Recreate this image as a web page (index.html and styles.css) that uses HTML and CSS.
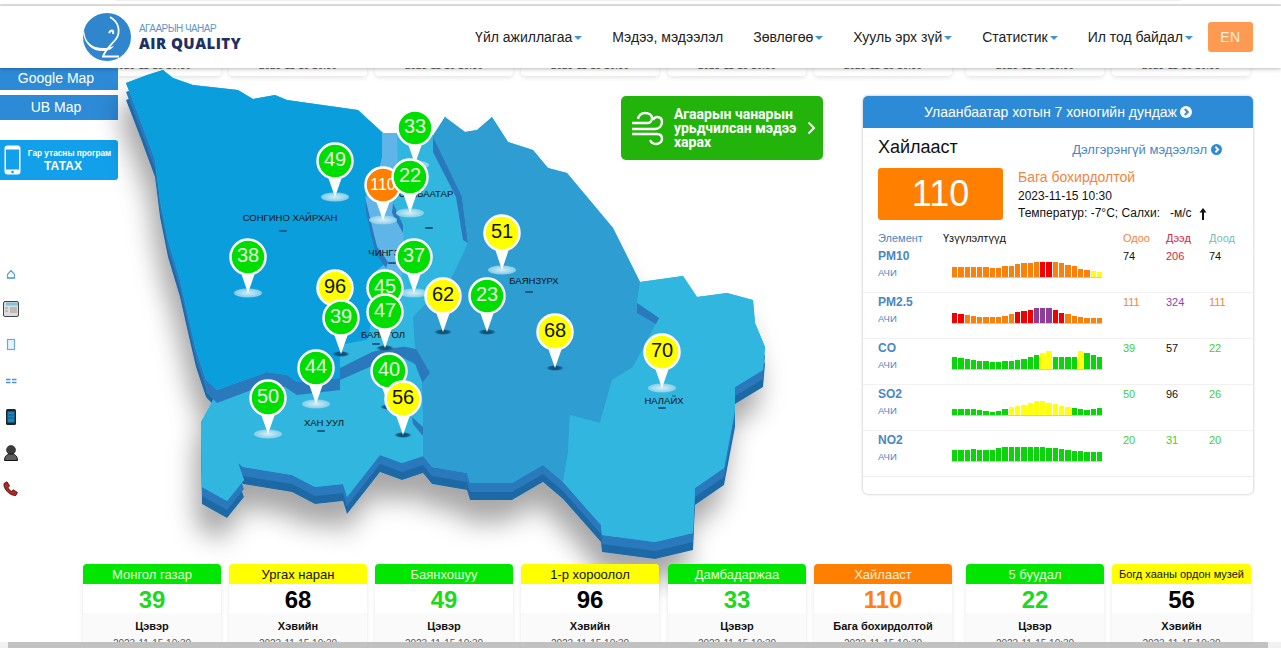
FILE: index.html
```html
<!DOCTYPE html>
<html lang="mn">
<head>
<meta charset="utf-8">
<title>Air Quality</title>
<link rel="stylesheet" href="styles.css">
</head>
<body>
<svg class="defs" width="0" height="0" aria-hidden="true">
  <symbol id="chev-circle" viewBox="0 0 12 12"><circle cx="6" cy="6" r="6" fill="currentColor"/><path d="M4.8 3 7.8 6 4.8 9" fill="none" stroke="var(--chev,#fff)" stroke-width="2"/></symbol>
</svg>
<div class="page">
  <div class="top-strip"><div class="top-sliver"></div></div>
  <header class="header">
    <a class="brand">
      <svg class="brand-mark" viewBox="0 0 48 48" width="48" height="48">
        <circle cx="24" cy="24" r="24" fill="#2f86cd"/>
        <path d="M0 20C2 32 10 38 19 38C25 38 29 36 31 33C26 35 20 36 14 34C7 32 3 27 1 17Z" fill="#fff"/>
        <circle cx="17" cy="19" r="15.500" fill="#2f86cd"/>
        <path d="M27 4C36 9 38 19 33 26C28 32 22 37 20 43.500L36 43.500" fill="none" stroke="#fff" stroke-width="1.800"/>
        <path d="M26 20C28 16 31 17 30 21" fill="none" stroke="#fff" stroke-width="2"/>
      </svg>
      <span class="brand-text">
        <span class="brand-top">АГААРЫН ЧАНАР</span>
        <span class="brand-main">AIR QUALITY</span>
      </span>
    </a>
    <nav class="nav">
      <a class="nav-item nav-drop">Үйл ажиллагаа</a>
      <a class="nav-item">Мэдээ, мэдээлэл</a>
      <a class="nav-item nav-drop">Зөвлөгөө</a>
      <a class="nav-item nav-drop">Хууль эрх зүй</a>
      <a class="nav-item nav-drop">Статистик</a>
      <a class="nav-item nav-drop">Ил тод байдал</a>
      <a class="lang">EN</a>
    </nav>
  </header>

  <div class="ghost-row">
    <div class="ghost">2023-11-15 10:30</div>
    <div class="ghost">2023-11-15 10:30</div>
    <div class="ghost">2023-11-15 10:30</div>
    <div class="ghost">2023-11-15 10:30</div>
    <div class="ghost shift-s">2023-11-15 10:30</div>
    <div class="ghost">2023-11-15 10:30</div>
    <div class="ghost shift-l">2023-11-15 10:30</div>
    <div class="ghost">2023-11-15 10:30</div>
  </div>

  <main class="main">
    <aside class="side">
      <a class="map-btn map-btn-first">Google Map</a>
      <a class="map-btn map-btn-second">UB Map</a>
      <a class="app-banner">
        <svg class="app-phone" viewBox="0 0 17 30" width="17" height="30">
          <rect x="0.5" y="0.5" width="16" height="29" rx="3" fill="#fff"/>
          <rect x="2" y="4.5" width="13" height="20" fill="#12a0ea"/>
          <circle cx="8.5" cy="27" r="1.3" fill="#12a0ea"/>
        </svg>
        <span class="app-text"><span class="app-small">Гар утасны програм</span><span class="app-big">ТАТАХ</span></span>
      </a>
      <ul class="side-icons">
        <li><svg width="16" height="16" viewBox="0 0 16 16"><path d="M4.500 13V9.500L8 5.500 11.500 9.500V13Z" fill="none" stroke="#5aa3d8" stroke-width="1.200"/><path d="M4 13h8" stroke="#5aa3d8" stroke-width="1.500"/></svg></li>
        <li><svg width="16" height="16" viewBox="0 0 16 16"><rect x=".5" y=".5" width="15" height="15" rx="1.500" fill="#ddd" stroke="#444"/><path d="M3 1.500h12v3H3z" fill="#7cc6dd"/><rect x="7" y="6" width="7" height="6" fill="#bbb"/><path d="M2 7h3M2 10h3" stroke="#999"/></svg></li>
        <li><svg width="16" height="16" viewBox="0 0 16 16"><rect x="4.500" y="2.500" width="7" height="10" fill="#eaf3fb" stroke="#6aa9dc" stroke-width="1.200"/></svg></li>
        <li><svg width="16" height="16" viewBox="0 0 16 16"><path d="M3 6.500h4.500M3 9.500h4.500M9 6.500h4.500M9 9.500h4.500" stroke="#4c93d4" stroke-width="1.500"/></svg></li>
        <li><svg width="16" height="16" viewBox="0 0 16 16"><rect x="3" y="0" width="10" height="16" rx="1.500" fill="#222"/><rect x="4.500" y="2.500" width="7" height="11" fill="#1188c4"/><path d="M5 6h6M5 9h6" stroke="#0b5c86"/></svg></li>
        <li><svg width="16" height="16" viewBox="0 0 16 16"><circle cx="8" cy="5" r="4.500" fill="#3c3c3c" stroke="#222" stroke-width=".6"/><path d="M1.500 15.500c0-5 3-6.500 6.500-6.500s6.500 1.500 6.500 6.500z" fill="#5e5e5e" stroke="#111"/></svg></li>
        <li><svg width="16" height="16" viewBox="0 0 16 16"><path d="M1 2.500 4 .8l2.500 4-1.500 2c.8 1.600 1.800 2.700 3.500 3.500l1.800-1.500 4.200 2.700-1.700 3C7 15 0 8 1 2.500Z" fill="#b8241f" stroke="#3a0d0b" stroke-width=".8"/></svg></li>
      </ul>
    </aside>

    <section class="stage">
      <svg class="map" viewBox="118 68 745 496" width="745" height="496">
        <defs>
          <filter id="map-shadow" filterUnits="userSpaceOnUse" x="60" y="20" width="800" height="600">
            <feDropShadow dx="-6" dy="22" stdDeviation="13" flood-color="#000" flood-opacity=".35"/>
          </filter>
          <radialGradient id="glow"><stop offset="0" stop-color="#e6f6fb"/><stop offset="1" stop-color="#8fd0e8"/></radialGradient>
          <radialGradient id="shade"><stop offset="0" stop-color="#0f4a70"/><stop offset=".6" stop-color="#17587f"/><stop offset="1" stop-color="#17587f" stop-opacity="0"/></radialGradient>
          <path id="outline" d="M126 83 147 75 163 70 173 78 193 85 238 90 253 99 275 95 287 100 358 110 383 133 433 135 445 117 465 132 477 130 492 117 508 142 533 150 548 168 567 173 613 228 640 282 683 276 697 297 727 293 753 300 755 323 765 347 763 370 735 387 735 410 724 468 695 488 693 533 655 542 602 535 601 525 563 482 543 465 512 483 470 483 467 473 432 467 423 456 402 463 380 455 347 497 343 484 315 487 292 475 243 467 238 463 244 480 227 501 202 487 201 422 213 400 217 392 206 380 196 350 189 320 180 280 168 240 160 200 155 160 141 122Z"/>
        </defs>
        <g filter="url(#map-shadow)">
          <use href="#outline" y="17" class="wall-low"/>
          <use href="#outline" y="9" class="wall-high"/>
          <use href="#outline" class="face-khan"/>
        </g>
        <path class="face-khan" d="M201 422 213 400 217 392 270 375 340 378 400 345 423 380 423 456 402 463 380 455 347 497 343 484 315 487 292 475 243 467 238 463 244 480 227 501 202 487Z"/>
        <path class="wall-high" d="M206 380 217 390 267 372 287 375 297 382 340 378 340 390 297 395 285 387 267 384 217 403 206 392Z"/>
        <path class="wall-high" d="M340 368 372 352 398 345 400 355 372 366 340 380Z"/>
        <path class="wall-high" d="M397 345 420 350 431 374 423 384 415 364 398 355Z"/>
        <path class="wall-high" d="M412 417 423 427 423 436 413 424Z"/>
        <path class="face-skh" d="M126 83 147 75 163 70 173 78 193 85 238 90 253 99 275 95 287 100 358 110 383 133 382 157 378 175 365 197 370 223 377 247 385 265 377 280 372 320 367 340 340 345 340 378 297 382 287 375 267 372 217 390 206 380 196 350 189 320 180 280 168 240 160 200 155 160 141 122Z"/>
        <path class="face-khan" d="M383 133 433 135 456 197 468 245 452 277 418 305 415 345 372 351 340 368 340 345 367 340 378 300 385 265Z"/>
        <path class="wall-high" d="M433 137 445 117 462 197 468 243 463 240 456 197 433 152Z"/>
        <path class="face-chin" d="M382 133 397 133 398 175 392 200 403 226 405 262 398 292 380 292 377 270 388 262 377 245 370 225 365 200 378 175 382 157Z"/>
        <path class="wall-high" d="M365 197 377 247 388 262 386 268 375 252 366 212Z"/>
        <path class="wall-high" d="M393 203 403 225 403 233 392 213Z"/>
        <path class="face-bayanz" d="M433 137 445 117 465 132 477 130 492 117 508 142 533 150 548 168 567 173 613 228 640 282 637 303 659 318 633 367 612 380 600 423 570 415 568 453 563 482 543 465 512 483 470 483 467 473 432 467 423 456 423 417 422 383 430 373 415 347 413 317 452 277 468 243 462 197Z"/>
        <path class="face-khan" d="M640 282 683 276 697 297 727 293 753 300 755 323 765 347 763 370 735 387 735 410 724 468 695 488 693 533 655 542 602 535 601 525 563 482 568 453 570 415 600 423 612 380 633 367 659 318 637 303Z"/>
        <path class="wall-high" d="M637 303 659 318 656 324 637 313Z"/>

        <g class="labels">
          <text x="290" y="221" class="map-label">СОНГИНО ХАЙРХАН</text>
          <rect x="279" y="230" width="8" height="2" rx="1" class="dash"/>
          <text x="426" y="197" class="map-label">СҮХБААТАР</text>
          <rect x="425" y="227" width="8" height="2" rx="1" class="dash"/>
          <text x="397" y="256" class="map-label">ЧИНГЭЛТЭЙ</text>
          <rect x="388" y="262" width="8" height="2" rx="1" class="dash"/>
          <text x="534" y="284" class="map-label">БАЯНЗҮРХ</text>
          <rect x="525" y="291" width="8" height="2" rx="1" class="dash"/>
          <text x="383" y="338" class="map-label">БАЯНГОЛ</text>
          <rect x="372" y="343" width="8" height="2" rx="1" class="dash"/>
          <text x="324" y="426" class="map-label">ХАН УУЛ</text>
          <rect x="317" y="430" width="8" height="2" rx="1" class="dash"/>
          <text x="664" y="404" class="map-label">НАЛАЙХ</text>
          <rect x="658" y="407" width="8" height="2" rx="1" class="dash"/>
        </g>

        <g transform="translate(415 128)" class="pin green"><ellipse cy="37" rx="14" ry="4.500" class="glow"/><path d="M-7 16 0 36 7 16Z" class="tail"/><circle r="17.500" class="disc"/><text y="4.500">33</text></g>
        <g transform="translate(335 161)" class="pin green"><ellipse cy="36" rx="14" ry="4.500" class="glow"/><path d="M-7 16 0 36 7 16Z" class="tail"/><circle r="17.500" class="disc"/><text y="4.500">49</text></g>
        <g transform="translate(383 185)" class="pin orange"><ellipse cy="35" rx="14" ry="4.500" class="glow"/><path d="M-7 16 0 35 7 16Z" class="tail"/><circle r="17.500" class="disc"/><text y="5" class="small">110</text></g>
        <g transform="translate(410 177)" class="pin green"><ellipse cy="36" rx="14" ry="4.500" class="glow"/><path d="M-7 16 0 36 7 16Z" class="tail"/><circle r="17.500" class="disc"/><text y="4.500">22</text></g>
        <g transform="translate(248 257)" class="pin green"><ellipse cy="36" rx="14" ry="4.500" class="glow"/><path d="M-7 16 0 36 7 16Z" class="tail"/><circle r="17.500" class="disc"/><text y="4.500">38</text></g>
        <g transform="translate(502 233)" class="pin yellow"><ellipse cy="37" rx="14" ry="4.500" class="glow"/><path d="M-7 16 0 37 7 16Z" class="tail"/><circle r="17.500" class="disc"/><text y="4.500">51</text></g>
        <g transform="translate(414 257)" class="pin green"><ellipse cy="36" rx="14" ry="4.500" class="glow"/><path d="M-7 16 0 36 7 16Z" class="tail"/><circle r="17.500" class="disc"/><text y="4.500">37</text></g>
        <g transform="translate(335 288)" class="pin yellow"><path d="M-7 16 0 36 7 16Z" class="tail"/><circle r="17.500" class="disc"/><text y="4.500">96</text></g>
        <g transform="translate(385 288)" class="pin green"><path d="M-7 16 0 36 7 16Z" class="tail"/><circle r="17.500" class="disc"/><text y="4.500">45</text></g>
        <g transform="translate(443 296)" class="pin yellow"><ellipse cy="36" rx="9" ry="3" class="shade"/><path d="M-7 16 0 36 7 16Z" class="tail"/><circle r="17.500" class="disc"/><text y="4.500">62</text></g>
        <g transform="translate(487 296)" class="pin green"><ellipse cy="36" rx="9" ry="3" class="shade"/><path d="M-7 16 0 36 7 16Z" class="tail"/><circle r="17.500" class="disc"/><text y="4.500">23</text></g>
        <g transform="translate(341 318)" class="pin green"><ellipse cy="36" rx="9" ry="3" class="shade"/><path d="M-7 16 0 36 7 16Z" class="tail"/><circle r="17.500" class="disc"/><text y="4.500">39</text></g>
        <g transform="translate(385 312)" class="pin green"><ellipse cy="36" rx="9" ry="3" class="shade"/><path d="M-7 16 0 36 7 16Z" class="tail"/><circle r="17.500" class="disc"/><text y="4.500">47</text></g>
        <g transform="translate(555 332)" class="pin yellow"><ellipse cy="36" rx="9" ry="3" class="shade"/><path d="M-7 16 0 36 7 16Z" class="tail"/><circle r="17.500" class="disc"/><text y="4.500">68</text></g>
        <g transform="translate(662 352)" class="pin yellow"><ellipse cy="36" rx="14" ry="4.500" class="glow"/><path d="M-7 16 0 36 7 16Z" class="tail"/><circle r="17.500" class="disc"/><text y="4.500">70</text></g>
        <g transform="translate(316 368)" class="pin green"><ellipse cy="36" rx="14" ry="4.500" class="glow"/><path d="M-7 16 0 36 7 16Z" class="tail"/><circle r="17.500" class="disc"/><text y="4.500">44</text></g>
        <g transform="translate(389 371)" class="pin green"><ellipse cy="36" rx="9" ry="3" class="shade"/><path d="M-7 16 0 36 7 16Z" class="tail"/><circle r="17.500" class="disc"/><text y="4.500">40</text></g>
        <g transform="translate(268 398)" class="pin green"><ellipse cy="36" rx="14" ry="4.500" class="glow"/><path d="M-7 16 0 36 7 16Z" class="tail"/><circle r="17.500" class="disc"/><text y="4.500">50</text></g>
        <g transform="translate(403 399)" class="pin yellow"><ellipse cy="36" rx="9" ry="3" class="shade"/><path d="M-7 16 0 36 7 16Z" class="tail"/><circle r="17.500" class="disc"/><text y="4.500">56</text></g>
      </svg>

      <a class="forecast">
        <svg class="wind" viewBox="631 110 33 36" width="33" height="36">
          <path d="M638 119C639 115 642 113 645 113C649 113 652 115 652 118C652 121 650 123 648 123H632M632 129H655C659 129 662 126 662 122C662 119 660 117 657 117C655 117 654 118 653 120M632 134H657C660 134 662 136 662 139C662 142 659 144 656 144C653 144 651 142 650 140" fill="none" stroke="#fff" stroke-width="2.400"/>
        </svg>
        <span class="forecast-text">Агаарын чанарын урьдчилсан мэдээ харах</span>
        <svg class="forecast-chev" viewBox="0 0 9 14" width="9" height="14"><path d="M1.500 1.500 7 7 1.500 12.500" fill="none" stroke="#fff" stroke-width="2"/></svg>
      </a>
    </section>

    <aside class="panel">
      <a class="panel-head">Улаанбаатар хотын 7 хоногийн дундаж <svg class="ico12" width="12" height="12"><use href="#chev-circle"/></svg></a>
      <div class="station-row">
        <h2 class="station">Хайлааст</h2>
        <a class="more">Дэлгэрэнгүй мэдээлэл <svg class="ico10" width="11" height="11"><use href="#chev-circle"/></svg></a>
      </div>
      <div class="summary">
        <div class="aqi-box">110</div>
        <div class="summary-text">
          <div class="level">Бага бохирдолтой</div>
          <div class="stamp">2023-11-15 10:30</div>
          <div class="weather"><span>Температур: -7°C; Салхи: &nbsp; -м/с</span>
            <svg class="arrow" viewBox="0 0 8 12" width="8" height="12"><path d="M4 0 7.500 4.500H5V12H3V4.500H.5Z" fill="#111"/></svg>
          </div>
        </div>
      </div>
      <div class="table">
        <div class="t-head">
          <span class="c-el">Элемент</span><span class="c-ind">Үзүүлэлтүүд</span>
          <span class="c-now">Одоо</span><span class="c-max">Дээд</span><span class="c-min">Доод</span>
        </div>
        <div class="t-row">
          <div><div class="el-name">PM10</div><div class="el-sub">АЧИ</div></div>
          <div class="spark">
            <i class="o" style="height:10px"></i><i class="o" style="height:10px"></i><i class="o" style="height:10px"></i><i class="o" style="height:10px"></i><i class="o" style="height:10px"></i><i class="o" style="height:10px"></i><i class="o" style="height:9px"></i><i class="o" style="height:9px"></i><i class="o" style="height:11px"></i><i class="o" style="height:11px"></i><i class="o" style="height:13px"></i><i class="o" style="height:14px"></i><i class="o" style="height:14px"></i><i class="o" style="height:15px"></i><i class="r" style="height:15px"></i><i class="r" style="height:15px"></i><i class="o" style="height:15px"></i><i class="o" style="height:14px"></i><i class="o" style="height:12px"></i><i class="o" style="height:11px"></i><i class="o" style="height:8px"></i><i class="o" style="height:7px"></i><i class="y" style="height:6px"></i><i class="y" style="height:5px"></i>
          </div>
          <span class="v">74</span><span class="v red">206</span><span class="v">74</span>
        </div>
        <div class="t-row">
          <div><div class="el-name">PM2.5</div><div class="el-sub">АЧИ</div></div>
          <div class="spark">
            <i class="r" style="height:10px"></i><i class="r" style="height:9px"></i><i class="o" style="height:8px"></i><i class="o" style="height:7px"></i><i class="o" style="height:6px"></i><i class="o" style="height:6px"></i><i class="o" style="height:6px"></i><i class="o" style="height:6px"></i><i class="o" style="height:7px"></i><i class="o" style="height:9px"></i><i class="r" style="height:11px"></i><i class="r" style="height:12px"></i><i class="r" style="height:13px"></i><i class="p" style="height:15px"></i><i class="p" style="height:15px"></i><i class="p" style="height:15px"></i><i class="r" style="height:13px"></i><i class="r" style="height:10px"></i><i class="o" style="height:9px"></i><i class="o" style="height:7px"></i><i class="o" style="height:6px"></i><i class="o" style="height:5px"></i><i class="o" style="height:5px"></i><i class="o" style="height:5px"></i>
          </div>
          <span class="v orange">111</span><span class="v purple">324</span><span class="v orange">111</span>
        </div>
        <div class="t-row">
          <div><div class="el-name">CO</div><div class="el-sub">АЧИ</div></div>
          <div class="spark">
            <i class="g" style="height:12px"></i><i class="g" style="height:11px"></i><i class="g" style="height:10px"></i><i class="g" style="height:9px"></i><i class="g" style="height:8px"></i><i class="g" style="height:8px"></i><i class="g" style="height:7px"></i><i class="g" style="height:7px"></i><i class="g" style="height:8px"></i><i class="g" style="height:8px"></i><i class="g" style="height:9px"></i><i class="g" style="height:10px"></i><i class="g" style="height:12px"></i><i class="g" style="height:14px"></i><i class="y" style="height:16px"></i><i class="y" style="height:18px"></i><i class="g" style="height:12px"></i><i class="g" style="height:12px"></i><i class="g" style="height:12px"></i><i class="g" style="height:12px"></i><i class="y" style="height:18px"></i><i class="g" style="height:16px"></i><i class="g" style="height:14px"></i><i class="g" style="height:12px"></i>
          </div>
          <span class="v green">39</span><span class="v">57</span><span class="v green">22</span>
        </div>
        <div class="t-row">
          <div><div class="el-name">SO2</div><div class="el-sub">АЧИ</div></div>
          <div class="spark">
            <i class="g" style="height:6px"></i><i class="g" style="height:6px"></i><i class="g" style="height:6px"></i><i class="g" style="height:6px"></i><i class="g" style="height:5px"></i><i class="g" style="height:4px"></i><i class="g" style="height:3px"></i><i class="g" style="height:4px"></i><i class="g" style="height:6px"></i><i class="y" style="height:8px"></i><i class="y" style="height:9px"></i><i class="y" style="height:10px"></i><i class="y" style="height:12px"></i><i class="y" style="height:14px"></i><i class="y" style="height:14px"></i><i class="y" style="height:12px"></i><i class="y" style="height:11px"></i><i class="y" style="height:9px"></i><i class="y" style="height:8px"></i><i class="g" style="height:7px"></i><i class="g" style="height:6px"></i><i class="g" style="height:5px"></i><i class="g" style="height:6px"></i><i class="g" style="height:7px"></i>
          </div>
          <span class="v green">50</span><span class="v">96</span><span class="v green">26</span>
        </div>
        <div class="t-row">
          <div><div class="el-name">NO2</div><div class="el-sub">АЧИ</div></div>
          <div class="spark">
            <i class="g" style="height:11px"></i><i class="g" style="height:11px"></i><i class="g" style="height:11px"></i><i class="g" style="height:12px"></i><i class="g" style="height:11px"></i><i class="g" style="height:11px"></i><i class="g" style="height:11px"></i><i class="g" style="height:13px"></i><i class="g" style="height:14px"></i><i class="g" style="height:14px"></i><i class="g" style="height:14px"></i><i class="g" style="height:14px"></i><i class="g" style="height:14px"></i><i class="g" style="height:14px"></i><i class="g" style="height:14px"></i><i class="g" style="height:13px"></i><i class="g" style="height:13px"></i><i class="g" style="height:12px"></i><i class="g" style="height:11px"></i><i class="g" style="height:10px"></i><i class="g" style="height:10px"></i><i class="g" style="height:9px"></i><i class="g" style="height:9px"></i><i class="g" style="height:9px"></i>
          </div>
          <span class="v green">20</span><span class="v green">31</span><span class="v green">20</span>
        </div>
      </div>
    </aside>
  </main>

  <section class="cards">
    <article class="card"><h3 class="card-head bg-green">Монгол газар</h3><div class="card-num t-green">39</div><div class="card-body"><div class="card-level">Цэвэр</div><div class="card-date">2023-11-15 10:30</div></div></article>
    <article class="card"><h3 class="card-head bg-yellow">Ургах наран</h3><div class="card-num">68</div><div class="card-body"><div class="card-level">Хэвийн</div><div class="card-date">2023-11-15 10:30</div></div></article>
    <article class="card"><h3 class="card-head bg-green">Баянхошуу</h3><div class="card-num t-green">49</div><div class="card-body"><div class="card-level">Цэвэр</div><div class="card-date">2023-11-15 10:30</div></div></article>
    <article class="card"><h3 class="card-head bg-yellow">1-р хороолол</h3><div class="card-num">96</div><div class="card-body"><div class="card-level">Хэвийн</div><div class="card-date">2023-11-15 10:30</div></div></article>
    <article class="card shift-s"><h3 class="card-head bg-green">Дамбадаржаа</h3><div class="card-num t-green">33</div><div class="card-body"><div class="card-level">Цэвэр</div><div class="card-date">2023-11-15 10:30</div></div></article>
    <article class="card"><h3 class="card-head bg-orange">Хайлааст</h3><div class="card-num t-orange">110</div><div class="card-body"><div class="card-level">Бага бохирдолтой</div><div class="card-date">2023-11-15 10:30</div></div></article>
    <article class="card shift-l"><h3 class="card-head bg-green">5 буудал</h3><div class="card-num t-green">22</div><div class="card-body"><div class="card-level">Цэвэр</div><div class="card-date">2023-11-15 10:30</div></div></article>
    <article class="card"><h3 class="card-head bg-yellow head-small">Богд хааны ордон музей</h3><div class="card-num">56</div><div class="card-body"><div class="card-level">Хэвийн</div><div class="card-date">2023-11-15 10:30</div></div></article>
  </section>

  <div class="scrollbar"><div class="scroll-thumb"></div></div>
</div>
</body>
</html>
```

FILE: styles.css
```css
* { box-sizing: border-box; }
html, body { margin: 0; padding: 0; height: 100%; overflow: hidden; background: #fff; }
body { font-family: "Liberation Sans", Arial, sans-serif; color: #111; }
a { color: inherit; text-decoration: none; }
.defs { position: absolute; }

.page { position: relative; width: 1281px; height: 648px; display: flex; flex-direction: column; overflow: hidden; }

.top-strip { height: 6px; flex: none; border-bottom: 2px solid #e4e4e4; }
.top-sliver { height: 1px; margin: 0 100px 0 115px; background: #f0f0f0; }

.header { position: relative; z-index: 3; flex: none; height: 62px; padding: 0 28px 0 83px; display: flex; align-items: center; justify-content: space-between; background: #fff; box-shadow: 0 1px 4px rgba(0,0,0,.28); }
.brand { display: flex; align-items: center; gap: 8px; }
.brand-mark { display: block; }
.brand-text { display: flex; flex-direction: column; }
.brand-top { font-size: 10px; line-height: 12px; color: #5e97cc; letter-spacing: -.55px; }
.brand-main { font-family: "Open Sans", sans-serif; font-weight: 800; font-size: 15px; line-height: 17px; color: #20305f; letter-spacing: .45px; }
.nav { display: flex; align-items: center; }
.nav-item { font-size: 14px; color: #222; margin-right: 30px; white-space: nowrap; }
.nav-drop::after { content: ""; display: inline-block; margin-left: 2px; vertical-align: 2px; border: 4px solid transparent; border-top-color: #3d95d2; border-bottom: 0; }
.lang { width: 45px; height: 30px; display: flex; align-items: center; justify-content: center; background: #ff9a52; color: #fdeee0; border-radius: 3px; font-size: 14px; letter-spacing: .5px; margin-left: -15px; }

.ghost-row { position: absolute; top: 60px; left: 83px; display: flex; gap: 8px; z-index: 0; }
.ghost { width: 138px; height: 16px; font-size: 10px; line-height: 11px; text-align: center; color: #555; background: #fff; border-radius: 4px; box-shadow: 0 2px 4px rgba(0,0,0,.1); }

.main { position: relative; z-index: 1; flex: none; height: 496px; display: flex; align-items: flex-start; }

.side { flex: none; width: 118px; display: flex; flex-direction: column; }
.map-btn { display: flex; align-items: center; justify-content: center; background: #2d8ad6; color: #fff; font-size: 14px; padding: 0 6px 2px 0; }
.map-btn-first { height: 22px; }
.map-btn-second { height: 25px; margin-top: 5px; }
.app-banner { height: 40px; margin-top: 20px; display: flex; align-items: center; padding-left: 4px; background: #12a0ea; border-radius: 0 3px 3px 0; color: #fff; }
.app-phone { flex: none; }
.app-text { flex: 1; display: flex; flex-direction: column; align-items: center; font-weight: 700; }
.app-small { font-size: 8.300px; line-height: 12px; white-space: nowrap; }
.app-big { font-size: 12px; line-height: 14px; margin-right: 13px; }
.side-icons { list-style: none; margin: 75px 0 0; padding: 0; display: flex; flex-direction: column; }
.side-icons li { height: 36px; display: flex; align-items: center; padding-left: 3px; }

.stage { position: relative; flex: none; width: 745px; height: 496px; }
.map { display: block; overflow: visible; }
.wall-low { fill: #1f69a6; }
.wall-high { fill: #2a79bd; }
.face-skh { fill: #0a9fdc; }
.face-khan { fill: #30b6df; }
.face-chin { fill: #5fb5e7; }
.face-bayanz { fill: #2e9dd2; }
.map-label { font-size: 9.500px; fill: #111; text-anchor: middle; }
.dash { fill: #1d5a86; }
.pin text { font-size: 20px; text-anchor: middle; }
.pin text.small { font-size: 16px; }
.pin .tail { fill: #fff; }
.pin .disc { stroke: #fff; stroke-width: 2.500; }
.pin .glow { fill: url(#glow); opacity: .9; }
.pin .shade { fill: url(#shade); }
.pin.green .disc { fill: #00dd00; }
.pin.green text { fill: #eafbe0; }
.pin.yellow .disc { fill: #ffff00; }
.pin.yellow text { fill: #111; }
.pin.orange .disc { fill: #ff8000; }
.pin.orange text { fill: #fff; }

.forecast { position: absolute; left: 503px; top: 28px; width: 202px; height: 64px; display: flex; align-items: center; padding: 0 7px 0 10px; background: #22b40a; border-radius: 5px; color: #fff; }
.wind { flex: none; }
.forecast-text { flex: 1; margin-left: 10px; font-family: Roboto, sans-serif; font-weight: 700; font-size: 14px; line-height: 14.300px; }
.forecast-chev { flex: none; }

.panel { flex: none; width: 390px; height: 398px; margin-top: 28px; background: #fff; border-radius: 5px; box-shadow: 0 0 3px rgba(0,0,0,.3); overflow: hidden; }
.panel-head { height: 32px; display: flex; align-items: center; justify-content: center; gap: 3px; background: #2d8ad6; color: #fff; font-size: 14px; }
.ico12 { color: #fff; --chev: #2d8ad6; }
.station-row { height: 40px; padding: 0 31px 0 15px; display: flex; align-items: center; justify-content: space-between; }
.station { margin: 0 0 1px; font-size: 18px; font-weight: 400; color: #111; }
.more { display: flex; align-items: center; gap: 4px; font-size: 13px; color: #4a86c5; margin-top: 2px; }
.ico10 { color: #2d8ad6; }
.summary { display: flex; padding-left: 15px; height: 52px; }
.aqi-box { width: 125px; height: 52px; display: flex; align-items: center; justify-content: center; background: #ff8000; color: #fff; font-size: 36px; border-radius: 3px; }
.summary-text { margin-left: 15px; display: flex; flex-direction: column; }
.level { font-size: 14px; line-height: 18px; color: #f5843e; }
.stamp { margin-top: 2px; font-size: 12px; line-height: 16px; }
.weather { margin-top: 1px; font-size: 12px; line-height: 17px; display: flex; align-items: center; }
.arrow { margin-left: 7px; }

.table { margin-top: 10px; }
.t-head { height: 17px; margin-left: 15px; display: grid; grid-template-columns: 65px 180px 43px 43px 43px; align-items: start; font-size: 11px; line-height: 16px; }
.c-el { color: #4a86c5; }
.c-now { color: #f5843e; }
.c-max { color: #d9233c; }
.c-min { color: #6fbfc0; }
.t-row { position: relative; height: 46px; padding: 1px 0 0 15px; display: grid; grid-template-columns: 65px 180px 43px 43px 43px; align-items: start; border-bottom: 1px solid #f1f1f1; }
.t-row:last-child { border-bottom: 1px solid #eee; }
.el-name { font-size: 12px; line-height: 15px; font-weight: 700; color: #4a86c5; margin-top: 1px; }
.el-sub { font-size: 9.500px; line-height: 12px; margin-top: 3px; color: #4a86c5; }
.spark { width: 150px; height: 30px; margin-left: 9px; display: flex; align-items: flex-end; gap: 1px; border-bottom: 1px solid #ccc; }
.spark i { flex: 1; display: block; }
.spark .o { background: #f8820c; }
.spark .r { background: #f00000; }
.spark .p { background: #8e3e97; }
.spark .y { background: #ffff10; }
.spark .g { background: #0ad40a; }
.v { font-size: 11px; line-height: 14px; color: #111; margin-top: 1px; }
.v.red { color: #d9233c; }
.v.orange { color: #f5843e; }
.v.purple { color: #8e44ad; }
.v.green { color: #3ccf3c; }

.cards { position: relative; z-index: 2; flex: none; height: 78px; padding-left: 83px; display: flex; gap: 8px; overflow: hidden; }
.card { flex: none; width: 138px; height: 100px; background: #fff; border-radius: 4px; box-shadow: 0 1px 4px rgba(0,0,0,.1); }
.card:last-child { width: 139px; }
.shift-s { margin-left: 1px; }
.shift-l { margin-left: 6px; }
.card-head { margin: 0; height: 20px; display: flex; align-items: center; justify-content: center; border-radius: 4px 4px 0 0; font-size: 13px; font-weight: 400; white-space: nowrap; }
.bg-green { background: #00e600; color: #e9fbdc; }
.bg-yellow { background: #ffff00; color: #111; }
.bg-orange { background: #ff8000; color: #ffeedd; }
.head-small { font-size: 11px; }
.card-num { height: 29px; text-align: center; font-size: 24px; line-height: 31px; font-weight: 700; color: #000; }
.t-green { color: #1ed81e; }
.t-orange { color: #ff8013; }
.card-body { height: 60px; padding-top: 6px; background: #fafafa; text-align: center; }
.card-level { font-size: 11px; line-height: 14px; font-weight: 700; color: #111; }
.card-date { margin-top: 5px; font-size: 10px; line-height: 12px; color: #555; }

.scrollbar { position: relative; z-index: 2; flex: none; height: 6px; background: #f1f1f1; padding: 0 13px 0 8px; }
.scroll-thumb { height: 100%; background: #c1c1c1; }
```
